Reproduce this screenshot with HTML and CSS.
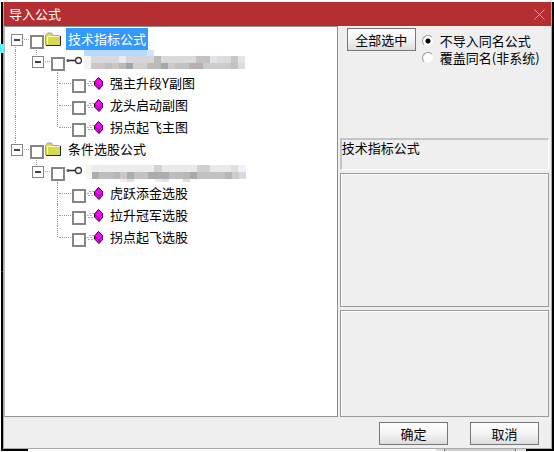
FILE: index.html
```html
<!DOCTYPE html>
<html lang="zh-CN">
<head>
<meta charset="utf-8">
<title>导入公式</title>
<link rel="stylesheet" href="styles.css">
</head>
<body>
<svg class="defs" aria-hidden="true">
  <symbol id="folder" viewBox="0 0 16 15">
    <path d="M1 3.500 2.500 1h4L8 3.500h7V13H1z" fill="#d9d94c"/>
    <path d="M.5 13V3.500l2-2.500h4L8 3.500h6.500" fill="none" stroke="#a5a58c"/>
    <path d="M2.500 12V4.500h12" fill="none" stroke="#ffffc0"/>
    <path d="M1 13.500h14.500V4" fill="none" stroke="#222"/>
  </symbol>
  <symbol id="key" viewBox="0 0 16 15">
    <path d="M3 6.500h6" stroke="#222" stroke-width="1.500"/>
    <circle cx="2" cy="6.500" r="1.500" fill="#555"/>
    <circle cx="12.500" cy="6.500" r="3" fill="#fff" stroke="#333" stroke-width="1.300"/>
  </symbol>
  <symbol id="gem" viewBox="0 0 16 15">
    <path d="M2 5.500h5M0 7.500h6M1 9.500h6" stroke="#aaa" stroke-dasharray="2 1"/>
    <path d="M11.500 1.500 16 6v3l-4 4.500L7.500 9V6z" fill="#f0f" stroke="#111"/>
    <path d="M8 7 12 10l3.500-3.500M12 10v3" fill="none" stroke="#800080" stroke-width=".8"/>
  </symbol>
</svg>
<div class="desktop">
  <span class="mark cyan"></span><span class="mark red"></span>
  <main class="dialog">
    <header class="title">
      <h1>导入公式</h1>
      <button class="close" aria-label="关闭"><svg viewBox="0 0 11 11"><path d="M.5.5l10 10M10.500.5l-10 10"/></svg></button>
    </header>
    <div class="content">
      <div class="tree">
        <div class="row"><button class="slot first" aria-label="折叠"></button><input type="checkbox" id="c1"><svg class="icon"><use href="#folder"/></svg><label class="selected" for="c1">技术指标公式</label></div>
        <div class="row"><span class="slot line"></span><button class="slot last" aria-label="折叠"></button><input type="checkbox" aria-label="来源"><svg class="icon"><use href="#key"/></svg><svg class="mosaic" viewBox="0 0 164 22" shape-rendering="crispEdges">
          <path fill="#b8dcff" d="M0 0h63v6H0z"/><path fill="#cde6ff" d="M63 0h7v6h-7z"/>
          <path fill="#f6f3f1" d="M0 6h7v13H0z"/>
          <path fill="#dadada" d="M7 6h28v7H7z"/><path fill="#ebece9" d="M35 6h7v7h-7z"/><path fill="#d5d6d8" d="M42 6h28v7H42z"/><path fill="#b7bbbc" d="M70 6h7v7h-7z"/><path fill="#d9dad9" d="M77 6h35v7H77z"/><path fill="#c5c1c2" d="M112 6h14v7h-14z"/><path fill="#e2e5e9" d="M126 6h7v7h-7z"/><path fill="#dcdcdc" d="M133 6h14v7h-14z"/><path fill="#c6c5c7" d="M147 6h7v7h-7z"/><path fill="#e3e4e6" d="M154 6h7v7h-7z"/>
          <path fill="#cbc6c4" d="M7 13h14v6H7z"/><path fill="#bdc0c3" d="M21 13h7v6h-7z"/><path fill="#ccc6c4" d="M28 13h7v6h-7z"/><path fill="#b9b9bb" d="M35 13h7v6h-7z"/><path fill="#a2a6ab" d="M42 13h7v6h-7z"/><path fill="#d1d0cf" d="M49 13h14v6H49z"/><path fill="#bcbbb9" d="M63 13h14v6H63z"/><path fill="#a4a7ab" d="M77 13h7v6h-7z"/><path fill="#cfcac8" d="M84 13h7v6h-7z"/><path fill="#bfc1c3" d="M91 13h14v6H91z"/><path fill="#b6b0b0" d="M105 13h14v6h-14z"/><path fill="#cccbc9" d="M119 13h28v6h-28z"/><path fill="#c2c2c3" d="M147 13h7v6h-7z"/><path fill="#dcdde1" d="M154 13h7v6h-7z"/>
        </svg></div>
        <div class="row"><span class="slot line"></span><span class="slot"></span><span class="slot line branch"></span><input type="checkbox" id="c3"><svg class="icon"><use href="#gem"/></svg><label for="c3">强主升段Y副图</label></div>
        <div class="row"><span class="slot line"></span><span class="slot"></span><span class="slot line branch"></span><input type="checkbox" id="c4"><svg class="icon"><use href="#gem"/></svg><label for="c4">龙头启动副图</label></div>
        <div class="row"><span class="slot line"></span><span class="slot"></span><span class="slot line branch end"></span><input type="checkbox" id="c5"><svg class="icon"><use href="#gem"/></svg><label for="c5">拐点起飞主图</label></div>
        <div class="row"><button class="slot last" aria-label="折叠"></button><input type="checkbox" id="c6"><svg class="icon"><use href="#folder"/></svg><label for="c6">条件选股公式</label></div>
        <div class="row"><span class="slot"></span><button class="slot last" aria-label="折叠"></button><input type="checkbox" aria-label="来源"><svg class="icon"><use href="#key"/></svg><svg class="mosaic" viewBox="0 0 164 22" shape-rendering="crispEdges">
          <path fill="#f8f5ef" d="M2 5h6v14H2z"/>
          <path fill="#ececee" d="M8 5h62v7H8z"/><path fill="#d0d1d3" d="M70 5h8v7h-8z"/><path fill="#e9e9ea" d="M78 5h35v7H78z"/><path fill="#d0d0d2" d="M113 5h13v7h-13z"/><path fill="#ebeaea" d="M126 5h21v7h-21z"/><path fill="#dfdfe1" d="M147 5h7v7h-7z"/><path fill="#f2f1f6" d="M154 5h8v7h-8z"/>
          <path fill="#adadaf" d="M8 12h7v7H8z"/><path fill="#bfbdbd" d="M15 12h14v7H15z"/><path fill="#b5b8ba" d="M29 12h7v7h-7z"/><path fill="#cbc7c5" d="M36 12h7v7h-7z"/><path fill="#a9adb1" d="M43 12h7v7h-7z"/><path fill="#c5c1c2" d="M50 12h14v7H50z"/><path fill="#abacad" d="M64 12h21v7H64z"/><path fill="#babfc1" d="M85 12h7v7h-7z"/><path fill="#c2b9bb" d="M92 12h7v7h-7z"/><path fill="#bab8b6" d="M99 12h7v7h-7z"/><path fill="#a5aaad" d="M106 12h7v7h-7z"/><path fill="#c3c1c3" d="M113 12h28v7h-28z"/><path fill="#b9b4b5" d="M141 12h7v7h-7z"/><path fill="#ccc" d="M148 12h7v7h-7z"/><path fill="#dcd9e6" d="M155 12h7v7h-7z"/>
          <path fill="#f1ece8" d="M36 19h7v3h-7zM71 19h7v3h-7z"/><path fill="#dfe3e6" d="M43 19h7v3h-7zM78 19h7v3h-7z"/><path fill="#e2dcd8" d="M99 19h7v3h-7z"/>
        </svg></div>
        <div class="row"><span class="slot"></span><span class="slot"></span><span class="slot line branch"></span><input type="checkbox" id="c8"><svg class="icon"><use href="#gem"/></svg><label for="c8">虎跃添金选股</label></div>
        <div class="row"><span class="slot"></span><span class="slot"></span><span class="slot line branch"></span><input type="checkbox" id="c9"><svg class="icon"><use href="#gem"/></svg><label for="c9">拉升冠军选股</label></div>
        <div class="row"><span class="slot"></span><span class="slot"></span><span class="slot line branch end"></span><input type="checkbox" id="c10"><svg class="icon"><use href="#gem"/></svg><label for="c10">拐点起飞选股</label></div>
      </div>
      <section class="side">
        <div class="options">
          <button class="push">全部选中</button>
          <div class="radios">
            <label><input type="radio" name="mode" checked>不导入同名公式</label>
            <label><input type="radio" name="mode">覆盖同名(非系统)</label>
          </div>
        </div>
        <div class="caption">技术指标公式</div>
        <div class="pane tall"></div>
        <div class="pane"></div>
      </section>
    </div>
    <footer class="actions">
      <button class="push">确定</button>
      <button class="push">取消</button>
    </footer>
  </main>
  <div class="beneath"><span class="sheet"></span><span class="tab"></span></div>
</div>
</body>
</html>
```
FILE: styles.css
```css
* { box-sizing: border-box; }
body {
  margin: 0;
  background: #fff;
  font: 13px/16px "Noto Sans CJK SC", sans-serif;
  color: #000;
}
button, input { margin: 0; padding: 0; font: inherit; color: inherit; appearance: none; }
.defs { position: absolute; width: 0; height: 0; }
.desktop {
  position: relative;
  display: flex;
  flex-direction: column;
  height: calc(100vh - 3px);
  margin: 2px 0 1px 1px;
  padding: 0 2px;
  background: #000;
}
.mark { position: absolute; left: -1px; }
.cyan { top: 42px; width: 4px; height: 9px; background: #5ff; }
.red { top: 269px; left: 0; width: 2px; height: 1px; background: #a00; }
.dialog {
  display: flex;
  flex: 1;
  flex-direction: column;
  border: 1px solid #aaa;
  border-top: 0;
  background: #efefef;
}
.title {
  display: flex;
  align-items: center;
  justify-content: space-between;
  height: 24px;
  padding: 0 6px 0 5px;
  background: #b52e32;
  color: #fff;
}
.title h1 { margin: 0; font-size: 13px; font-weight: 400; }
.close { width: 11px; height: 11px; border: 0; background: none; }
.close svg { display: block; stroke: #e4a3a5; fill: none; }
.content { display: flex; flex: 1; gap: 2px; padding-right: 2px; }
.tree {
  flex: 1;
  padding: 1px 0 0 0;
  border: 1px solid #909090;
  border-left-color: #bbb;
  background: #fff;
}
.row { display: flex; align-items: center; height: 22px; }
.slot { position: relative; width: 21px; height: 22px; border: 0; background: none; }
.line::before, button.slot::before {
  content: "";
  position: absolute;
  left: 10px;
  top: 0;
  height: 22px;
  border-left: 1px dotted #999;
}
button.first::before { top: 11px; height: 11px; }
button.last::before, .end::before { height: 11px; }
.branch::after {
  content: "";
  position: absolute;
  left: 12px;
  top: 11px;
  width: 12px;
  border-top: 1px dotted #999;
}
button.slot {
  width: 25px;
  background: repeating-linear-gradient(90deg, #aaa 0 1px, transparent 1px 2px) 17px 11px / 7px 1px no-repeat;
}
button.slot::after {
  content: "";
  position: absolute;
  left: 6px;
  top: 6px;
  width: 10px;
  height: 10px;
  border: 1px solid #848484;
  background: linear-gradient(#444, #444) center / 6px 2px no-repeat #fff;
}
.row input {
  width: 14px;
  height: 14px;
  margin: 6px 1px 0 4px;
  border: 2px solid #858585;
  background: #fff;
}
.row button + input { margin-left: 0; }
.icon { width: 16px; height: 15px; margin-right: 5px; }
.row label { height: 22px; padding: 0 2px; line-height: 22px; }
.row .selected { background: #3399ff; color: #fff; }
.mosaic { width: 164px; height: 22px; margin-left: -3px; }
.side { display: flex; flex: 0 0 38.4%; flex-direction: column; gap: 3px; padding-top: 2px; }
.options { display: flex; gap: 6px; height: 107px; padding-left: 7px; }
.push {
  width: 69px;
  height: 23px;
  border: 1px solid #777;
  background: linear-gradient(#fff, #f4f4f4 50%, #ddd);
}
.radios { padding-top: 4px; }
.radios label { display: flex; align-items: center; gap: 6px; height: 17px; }
.radios input {
  width: 12px;
  height: 12px;
  border: 1px solid;
  border-color: #999 #eee #eee #999;
  border-radius: 50%;
  background: #fff;
}
.radios input:checked { background: radial-gradient(#000 2px, #fff 3px); }
.caption {
  height: 32px;
  border: 1px solid;
  border-width: 2px 1px 1px 2px;
  border-color: #c4c4c4 #fff #fff #c4c4c4;
}
.pane { flex: 4; border: 1px solid #999; box-shadow: inset 1px 1px #fff; }
.tall { flex: 5; }
.actions { display: flex; justify-content: flex-end; gap: 22px; padding: 5px 12px 3px; }
.beneath { display: flex; gap: 8px; height: 2px; padding: 0 36px 0 25px; background: linear-gradient(90deg, #000 25px, #ddd 25px, #ddd calc(100% - 26px), #000 calc(100% - 26px)); }
.sheet { flex: 1; background: #fff; }
.tab { width: 72px; background: #ccc; border: solid #777; border-width: 0 1px; }
```
